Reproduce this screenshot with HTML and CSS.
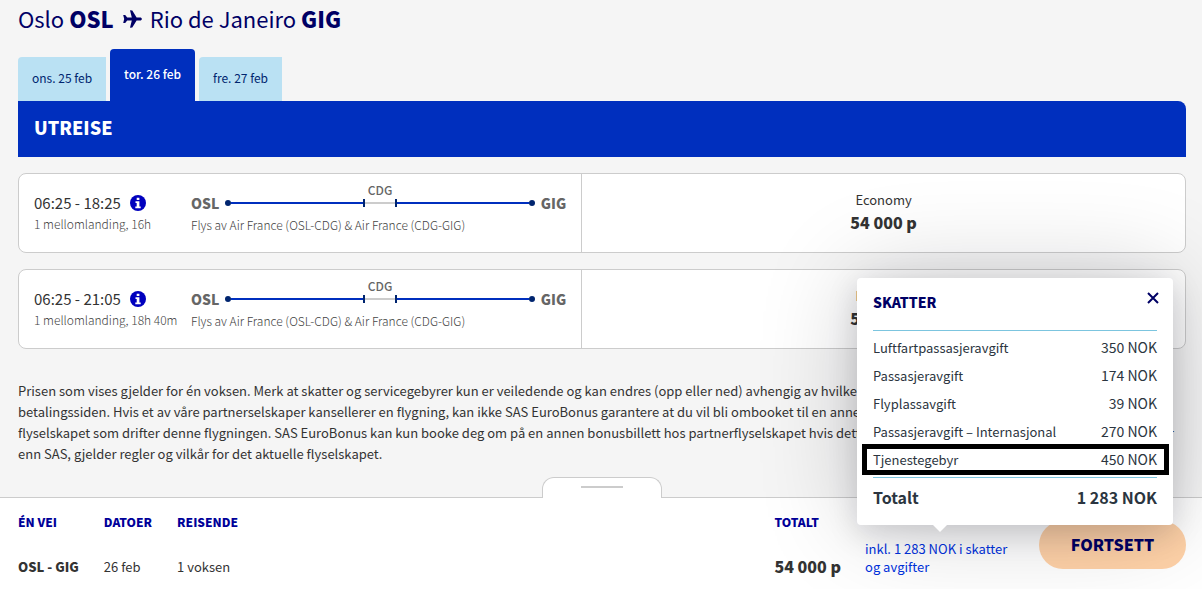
FILE: index.html
```
<!DOCTYPE html>
<html lang="no">
<head>
  <meta charset="UTF-8">
  <meta name="viewport" content="width=device-width, initial-scale=1">
  <title>Oslo - Rio de Janeiro</title>
  <link rel="stylesheet" href="styles.css">
</head>
<body>
  <main class="content">
    <h1 class="title">
      <span>Oslo <b>OSL</b></span>
      <svg class="plane" viewBox="0 0 20 20" aria-hidden="true">
        <path d="M8 1.200l2.300.3 4.300 7h3.400c1.100 0 1.900.7 1.900 1.500s-.8 1.500-1.900 1.500h-3.400l-4.300 7-2.300.3 1.800-7.300H5.200L3.200 14H1.200L2.200 10l-1-4h2l2 2.500h4.600z"/>
      </svg>
      <span>Rio de Janeiro <b>GIG</b></span>
    </h1>

    <!-- Datoer -->
    <nav class="tabs">
      <button class="tab">ons. 25 feb</button>
      <button class="tab active">tor. 26 feb</button>
      <button class="tab">fre. 27 feb</button>
    </nav>
    <h2 class="banner">UTREISE</h2>

    <!-- Flygninger -->
    <section class="flight">
      <div class="details">
        <div class="times">
          <div class="time">06:25 - 18:25
            <button class="info" aria-label="Informasjon">
              <svg viewBox="0 0 16 16"><circle cx="8" cy="8" r="8"/><path d="M6.700 2.700h2.700v2.300H6.700zM5.500 6.300h3.900v5.300h1.300v1.700H5.300v-1.700h1.400V8H5.500z"/></svg>
            </button>
          </div>
          <div class="small">1 mellomlanding, 16h</div>
        </div>
        <div class="route">
          <div class="line">
            <b>OSL</b>
            <i class="dot"></i><i class="leg"></i>
            <span class="stop"><span class="stop-name">CDG</span></span>
            <i class="leg"></i><i class="dot"></i>
            <b>GIG</b>
          </div>
          <div class="small">Flys av Air France (OSL-CDG) &amp; Air France (CDG-GIG)</div>
        </div>
      </div>
      <div class="price">
        <span>Economy</span>
        <b>54 000 p</b>
      </div>
    </section>

    <section class="flight">
      <div class="details">
        <div class="times">
          <div class="time">06:25 - 21:05
            <button class="info" aria-label="Informasjon">
              <svg viewBox="0 0 16 16"><circle cx="8" cy="8" r="8"/><path d="M6.700 2.700h2.700v2.300H6.700zM5.500 6.300h3.900v5.300h1.300v1.700H5.300v-1.700h1.400V8H5.500z"/></svg>
            </button>
          </div>
          <div class="small">1 mellomlanding, 18h 40m</div>
        </div>
        <div class="route">
          <div class="line">
            <b>OSL</b>
            <i class="dot"></i><i class="leg"></i>
            <span class="stop"><span class="stop-name">CDG</span></span>
            <i class="leg"></i><i class="dot"></i>
            <b>GIG</b>
          </div>
          <div class="small">Flys av Air France (OSL-CDG) &amp; Air France (CDG-GIG)</div>
        </div>
      </div>
      <div class="price">
        <span>Economy</span>
        <b>54 000 p</b>
      </div>
    </section>

    <p class="terms">
      Prisen som vises gjelder for én voksen. Merk at skatter og servicegebyrer kun er veiledende og kan endres (opp eller ned) avhengig av hvilken valuta du velger på<br>
      betalingssiden. Hvis et av våre partnerselskaper kansellerer en flygning, kan ikke SAS EuroBonus garantere at du vil bli ombooket til en annen flygning med<br>
      flyselskapet som drifter denne flygningen. SAS EuroBonus kan kun booke deg om på en annen bonusbillett hos partnerflyselskapet hvis dette er mulig. For flygninger solgt av andre flyselskaper<br>
      enn SAS, gjelder regler og vilkår for det aktuelle flyselskapet.
    </p>
  </main>

  <footer class="summary">
    <button class="handle" aria-label="Vis detaljer"></button>
    <dl class="trip">
      <div><dt>ÉN VEI</dt><dd><b>OSL - GIG</b></dd></div>
      <div><dt>DATOER</dt><dd>26 feb</dd></div>
      <div><dt>REISENDE</dt><dd>1 voksen</dd></div>
    </dl>
    <dl class="total">
      <div><dt>TOTALT</dt><dd><b>54 000 p</b></dd></div>
    </dl>
    <a class="tax-link" href="#skatter">inkl. 1 283 NOK i skatter og avgifter</a>
    <button class="continue">FORTSETT</button>

    <!-- Skatter og avgifter -->
    <div class="popup" id="skatter">
      <div class="popup-head">
        <h3>SKATTER</h3>
        <button class="close" aria-label="Lukk">
          <svg viewBox="0 0 12 12"><path d="M1 1l10 10M11 1L1 11"/></svg>
        </button>
      </div>
      <table class="taxes">
        <tbody>
          <tr><td>Luftfartpassasjeravgift</td><td>350 NOK</td></tr>
          <tr><td>Passasjeravgift</td><td>174 NOK</td></tr>
          <tr><td>Flyplassavgift</td><td>39 NOK</td></tr>
          <tr><td>Passasjeravgift – Internasjonal</td><td>270 NOK</td></tr>
          <tr class="marked"><td>Tjenestegebyr</td><td>450 NOK</td></tr>
        </tbody>
        <tfoot>
          <tr><th>Totalt</th><td>1 283 NOK</td></tr>
        </tfoot>
      </table>
    </div>
  </footer>
</body>
</html>
```
FILE: styles.css
```
* {
  box-sizing: border-box;
}
body {
  margin: 0;
  min-height: 100vh;
  display: flex;
  flex-direction: column;
  background: #f5f5f5;
  color: #333;
  font-family: "Noto Sans CJK SC", "Noto Sans", sans-serif;
  font-size: 13px;
  line-height: 21px;
}
button {
  font: inherit;
  border: none;
  padding: 0;
  cursor: pointer;
}
b {
  font-weight: 900;
}
.content {
  padding: 4px 16px 0 18px;
}

/* Overskrift og datoer */
.title {
  display: flex;
  align-items: center;
  gap: 8px;
  margin: 0 0 16px;
  font-size: 22px;
  font-weight: 400;
  line-height: 29px;
  color: #000065;
}
.plane {
  width: 20px;
  height: 20px;
  fill: #000065;
}
.tabs {
  display: flex;
  align-items: flex-end;
  gap: 4px;
}
.tab {
  height: 44px;
  padding: 0 14px 3px;
  background: #bae1f3;
  color: #00256f;
  font-size: 12px;
  border-radius: 4px 0 0;
}
.tab.active {
  height: 52px;
  background: #002fbe;
  color: #fff;
  font-weight: 500;
  border-radius: 4px 4px 0 0;
}
.banner {
  margin: 0 0 16px;
  padding: 14px 16px 18px;
  background: #002fbe;
  color: #fff;
  font-size: 18px;
  font-weight: 900;
  line-height: 24px;
  border-radius: 0 8px 0 0;
}

/* Flygning */
.flight {
  display: flex;
  min-height: 80px;
  margin-bottom: 16px;
  background: #fff;
  border: 1px solid #ccc;
  border-radius: 8px;
}
.details {
  flex: 0 0 48.3%;
  display: flex;
  padding: 18px 15px 0;
  border-right: 1px solid #ccc;
}
.times {
  flex: 0 0 157px;
}
.time {
  display: flex;
  align-items: center;
  gap: 9px;
  font-size: 15px;
}
.info {
  width: 16px;
  height: 16px;
  background: none;
}
.info svg {
  display: block;
}
.info circle {
  fill: #0000be;
}
.info path {
  fill: #fff;
}
.small {
  color: #444;
  font-size: 12px;
  font-weight: 300;
  white-space: nowrap;
}
.route {
  flex: 1;
}
.line {
  display: flex;
  align-items: center;
  height: 22px;
  font-size: 14px;
  color: #666;
}
.line b:first-child {
  margin-right: 6px;
}
.line b:last-child {
  margin-left: 6px;
}
.dot {
  width: 6px;
  height: 6px;
  border-radius: 50%;
  background: #00256f;
}
.leg {
  flex: 1;
  height: 2px;
  background: #002fbe;
}
.stop {
  position: relative;
  width: 34px;
  height: 8px;
  border: solid #00256f;
  border-width: 0 2px;
  background: linear-gradient(#ccc, #ccc) center / 100% 2px no-repeat;
}
.stop-name {
  position: absolute;
  left: 0;
  right: 0;
  bottom: 7px;
  text-align: center;
  font-size: 12px;
  font-weight: 500;
}
.price {
  flex: 1;
  display: flex;
  flex-direction: column;
  align-items: center;
  justify-content: center;
  padding-bottom: 4px;
  line-height: 23px;
}
.price b {
  font-size: 16px;
}
.terms {
  margin: 31px 0 30px;
  white-space: nowrap;
}

/* Bunnlinje */
.summary {
  position: relative;
  display: flex;
  margin-top: auto;
  min-height: 92px;
  padding: 13px 16px 0 18px;
  background: #fff;
  border-top: 1px solid #ccc;
}
.handle {
  position: absolute;
  left: 50%;
  bottom: 100%;
  width: 120px;
  height: 21px;
  margin-left: -59px;
  background: linear-gradient(#ccc, #ccc) center 8px / 42px 2px no-repeat #fff;
  border: 1px solid #ccc;
  border-bottom: none;
  border-radius: 12px 12px 0 0;
}
.trip,
.total {
  display: flex;
  gap: 25px;
  margin: 0;
}
.trip {
  flex: 1;
}
.summary dt {
  margin-bottom: 24px;
  color: #000099;
  font-size: 12px;
  font-weight: 900;
}
.summary dd {
  margin: 0;
}
.total b {
  font-size: 16px;
}
.tax-link {
  width: 150px;
  margin: 29px 24px 0;
  color: #0032e0;
  line-height: 18px;
  text-decoration: none;
}
.continue {
  width: 147px;
  height: 48px;
  margin-top: 10px;
  padding-bottom: 2px;
  background: #ffd2a8;
  color: #000065;
  font-size: 16px;
  font-weight: 900;
  border-radius: 24px;
}

/* Skatter */
.popup {
  position: absolute;
  right: 29px;
  bottom: 64px;
  width: 316px;
  padding: 14px 16px 9px;
  background: #fff;
  border-radius: 4px;
  color: #2b3540;
  box-shadow: 0 0 100px rgba(0, 0, 20, 0.2), 0 8px 30px rgba(0, 0, 20, 0.15);
}
.popup::after {
  content: "";
  position: absolute;
  left: 76px;
  top: 100%;
  border: 7px solid transparent;
  border-top-color: #fff;
  border-bottom: none;
}
.popup-head {
  display: flex;
  justify-content: space-between;
  height: 39px;
  border-bottom: 1px solid #7cc5df;
}
.popup-head h3 {
  margin: 0;
  color: #000065;
  font-size: 14px;
  font-weight: 900;
}
.close {
  width: 12px;
  height: 12px;
  margin-right: -2px;
  background: none;
}
.close svg {
  display: block;
  fill: none;
  stroke: #000065;
  stroke-width: 2;
}
.taxes {
  width: 100%;
  margin-top: 2px;
  border-spacing: 0;
}
.taxes tbody::after {
  content: "";
  display: block;
  height: 4px;
}
.taxes td,
.taxes th {
  height: 28px;
  padding: 0;
  text-align: left;
  white-space: nowrap;
}
.taxes td:last-child {
  text-align: right;
  font-size: 14px;
}
.marked {
  position: relative;
}
.marked td:first-child::before {
  content: "";
  position: absolute;
  top: -1px;
  bottom: -2px;
  left: -11px;
  right: -12px;
  border: 5px solid #000;
}
.taxes tfoot td:last-child,
.taxes tfoot th {
  height: 39px;
  border-top: 1px solid #7cc5df;
  font-size: 16px;
  font-weight: bold;
}
```
